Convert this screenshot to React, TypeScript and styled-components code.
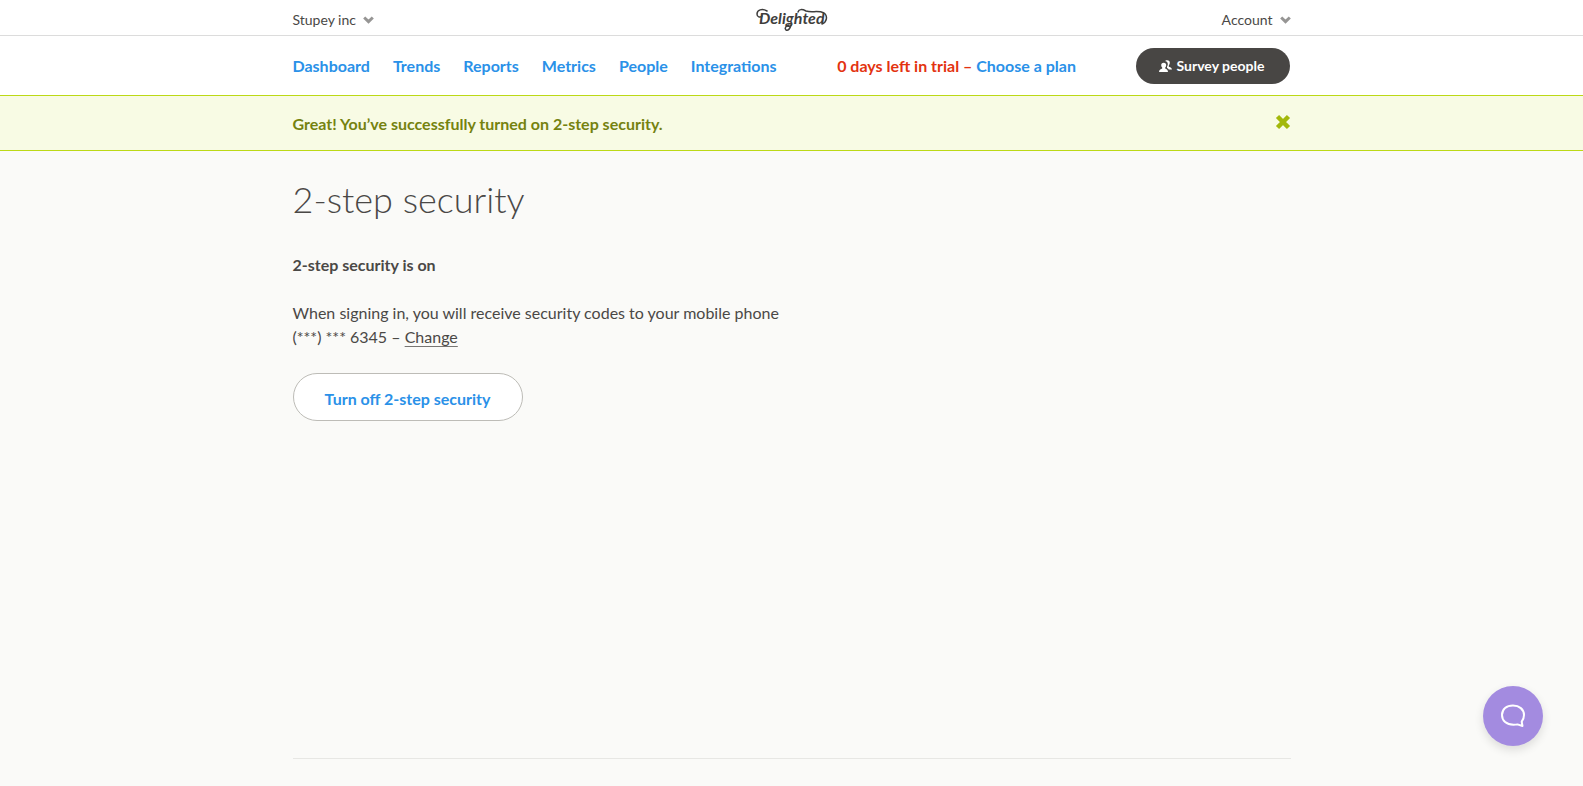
import React from "react";
import styled, { createGlobalStyle } from "styled-components";

const GlobalStyle = createGlobalStyle`
  * { box-sizing: border-box; }
  body {
    margin: 0;
    background: #fafaf8;
    color: #4a4846;
    font-family: Lato, "Liberation Sans", sans-serif;
    font-size: 16px;
    line-height: 24px;
  }
`;

const Page = styled.div`
  min-height: 100vh;
  display: flex;
  flex-direction: column;
`;

const Container = styled.div`
  width: 100%;
  max-width: 1038px;
  margin: 0 auto;
  padding: 0 20px;
`;

const TopBar = styled.header`
  background: #fff;
  border-bottom: 1px solid #dcdcdc;
`;

const TopRow = styled(Container)`
  display: grid;
  grid-template-columns: 1fr auto 1fr;
  align-items: center;
  height: 35px;
`;

const MenuButton = styled.button<{ $end?: boolean }>`
  display: flex;
  align-items: center;
  gap: 7px;
  justify-self: ${(p) => (p.$end ? "end" : "start")};
  padding: 5px 0 0;
  border: 0;
  background: none;
  color: inherit;
  font: inherit;
  font-size: 14px;
  line-height: 20px;
  cursor: pointer;
`;

const LogoLink = styled.a`
  display: block;
  padding-top: 4px;
  color: #3f3e3d;
  svg { display: block; }
`;

const NavBar = styled.div`
  background: #fff;
`;

const NavRow = styled(Container)`
  display: flex;
  justify-content: space-between;
  align-items: center;
  height: 59px;
`;

const Nav = styled.nav`
  display: flex;
  gap: 23px;
`;

const BlueLink = styled.a`
  color: #2a91e8;
  font-weight: 700;
  text-decoration: none;
`;

const Trial = styled.div`
  color: #e33310;
  font-weight: 700;
`;

const SurveyButton = styled.button`
  display: flex;
  align-items: center;
  justify-content: center;
  gap: 5px;
  width: 154px;
  height: 36px;
  padding: 0 4px 0 0;
  border: 0;
  border-radius: 18px;
  background: #484644;
  color: #fff;
  font: inherit;
  font-size: 14px;
  font-weight: 700;
  cursor: pointer;
`;

const Notice = styled.div`
  background: #f8fbe4;
  border: solid #bcd916;
  border-width: 1px 0;
`;

const NoticeRow = styled(Container)`
  display: flex;
  justify-content: space-between;
  align-items: center;
  height: 54px;
  padding-top: 2px;
  color: #75820f;
  font-weight: 700;
`;

const CloseButton = styled.button`
  padding: 0 0 4px;
  border: 0;
  background: none;
  color: #a3b80b;
  cursor: pointer;
  svg { display: block; }
`;

const Main = styled(Container).attrs({ as: "main" })`
  flex: 1;
  padding-top: 22px;
`;

const Title = styled.h1`
  margin: 0;
  font-size: 36px;
  line-height: 52px;
  font-weight: 300;
`;

const Status = styled.h2`
  margin: 28px 0 24px;
  font-size: 16px;
  line-height: 24px;
  font-weight: 700;
`;

const Description = styled.p`
  max-width: 500px;
  margin: 0 0 24px;
`;

const PhoneLine = styled.span`
  display: block;
`;

const ChangeLink = styled.a`
  color: inherit;
  text-decoration: underline;
  text-decoration-color: #777573;
  text-decoration-thickness: 1px;
  text-decoration-skip-ink: none;
  text-underline-offset: 3px;
`;

const OutlineButton = styled.button`
  width: 230px;
  height: 48px;
  padding: 4px 0 0;
  border: 1px solid #bdbcb7;
  border-radius: 24px;
  background: #fff;
  color: #2a91e8;
  font: inherit;
  font-weight: 700;
  cursor: pointer;
`;

const Footer = styled(Container).attrs({ as: "footer" })`
  &::before {
    content: "";
    display: block;
    height: 27px;
    border-top: 1px solid #e7e7e4;
  }
`;

const ChatButton = styled.button`
  position: fixed;
  right: 40px;
  bottom: 40px;
  display: grid;
  place-items: center;
  width: 60px;
  height: 60px;
  padding: 0;
  border: 0;
  border-radius: 50%;
  background: #a38be0;
  box-shadow: 0 4px 10px rgba(0, 0, 0, 0.12);
  cursor: pointer;
`;

const Chevron = () => (
  <svg width="11" height="8" viewBox="0 0 11 8" aria-hidden="true">
    <path d="M1.2 1.5 5.5 5.6 9.8 1.5" fill="none" stroke="#969594" strokeWidth="3" />
  </svg>
);

const Logo = () => (
  <svg width="72" height="24" viewBox="0 0 72 24" role="img" aria-label="Delighted">
    <text
      x="3"
      y="16"
      fill="currentColor"
      fontFamily="Lato, sans-serif"
      fontSize="16"
      fontStyle="italic"
      fontWeight="700"
    >
      Delighted
    </text>
    <g fill="none" stroke="currentColor" strokeWidth="1.5" strokeLinecap="round">
      <path d="M11 3C6 0 1 2 1 6c0 3 3 4 5 2" />
      <path d="M42 4c1-3 4-3 8-1 6 2 12-1 18 2 4 3 3 9-2 11" />
      <path d="M35 17c-1 4-3 6-5 5-2-2 0-4 3-5" />
    </g>
  </svg>
);

const PeopleIcon = () => (
  <svg width="13" height="12" viewBox="0 0 13 12" fill="#fff" aria-hidden="true">
    <path d="M6.500.6C8 -.3 10.800 0 10.800 2.500c0 1.400-.5 2.200-1 2.900v1.400c1 .5 2.900.8 3.200 2.700H9.800C9.200 8.600 8.700 8.200 8 7.900V6.800c.6-.9.9-1.800.8-2.900C8.700 2.500 7.800 1.500 6.500 1.300z" />
    <path d="M4.700 2.700C6.400 2.700 7.300 3.800 7.200 5.200 7.100 6.300 6.700 7 6.200 7.600v1C7.400 9.200 8.900 9.500 9 12H0C.1 9.500 2 9.200 3.200 8.600v-1C2.600 7 2.300 6.300 2.200 5.200 2.100 3.800 3 2.700 4.700 2.700z" />
  </svg>
);

const CloseIcon = () => (
  <svg width="16" height="16" viewBox="0 0 16 16" aria-hidden="true">
    <path d="M2.500 2.500l11 11M13.500 2.500l-11 11" stroke="currentColor" strokeWidth="4.5" />
  </svg>
);

const ChatIcon = () => (
  <svg width="26" height="24" viewBox="0 0 26 24" aria-hidden="true">
    <path
      d="M13 1.500C19.200 1.500 24 5.300 24 11c0 2.800-1 5-2.300 6.700l.8 4.300-5-1.600c-1.200.3-2.500.4-4 .4C6.500 20.800 2 16.800 2 11S6.500 1.500 13 1.500z"
      fill="none"
      stroke="#fff"
      strokeWidth="2"
      strokeLinejoin="round"
    />
  </svg>
);

const navItems = ["Dashboard", "Trends", "Reports", "Metrics", "People", "Integrations"];

export default function App() {
  return (
    <Page>
      <GlobalStyle />
      <TopBar>
        <TopRow>
          <MenuButton>
            Stupey inc <Chevron />
          </MenuButton>
          <LogoLink href="#">
            <Logo />
          </LogoLink>
          <MenuButton $end>
            Account <Chevron />
          </MenuButton>
        </TopRow>
      </TopBar>
      <NavBar>
        <NavRow>
          <Nav>
            {navItems.map((item) => (
              <BlueLink key={item} href="#">
                {item}
              </BlueLink>
            ))}
          </Nav>
          <Trial>
            0 days left in trial – <BlueLink href="#">Choose a plan</BlueLink>
          </Trial>
          <SurveyButton>
            <PeopleIcon />
            Survey people
          </SurveyButton>
        </NavRow>
      </NavBar>
      <Notice role="status">
        <NoticeRow>
          <span>Great! You’ve successfully turned on 2-step security.</span>
          <CloseButton aria-label="Dismiss">
            <CloseIcon />
          </CloseButton>
        </NoticeRow>
      </Notice>
      <Main>
        <Title>2-step security</Title>
        <Status>2-step security is on</Status>
        <Description>
          When signing in, you will receive security codes to your mobile phone
          <PhoneLine>
            (***) *** 6345 – <ChangeLink href="#">Change</ChangeLink>
          </PhoneLine>
        </Description>
        <OutlineButton>Turn off 2-step security</OutlineButton>
      </Main>
      <Footer />
      <ChatButton aria-label="Open chat">
        <ChatIcon />
      </ChatButton>
    </Page>
  );
}
